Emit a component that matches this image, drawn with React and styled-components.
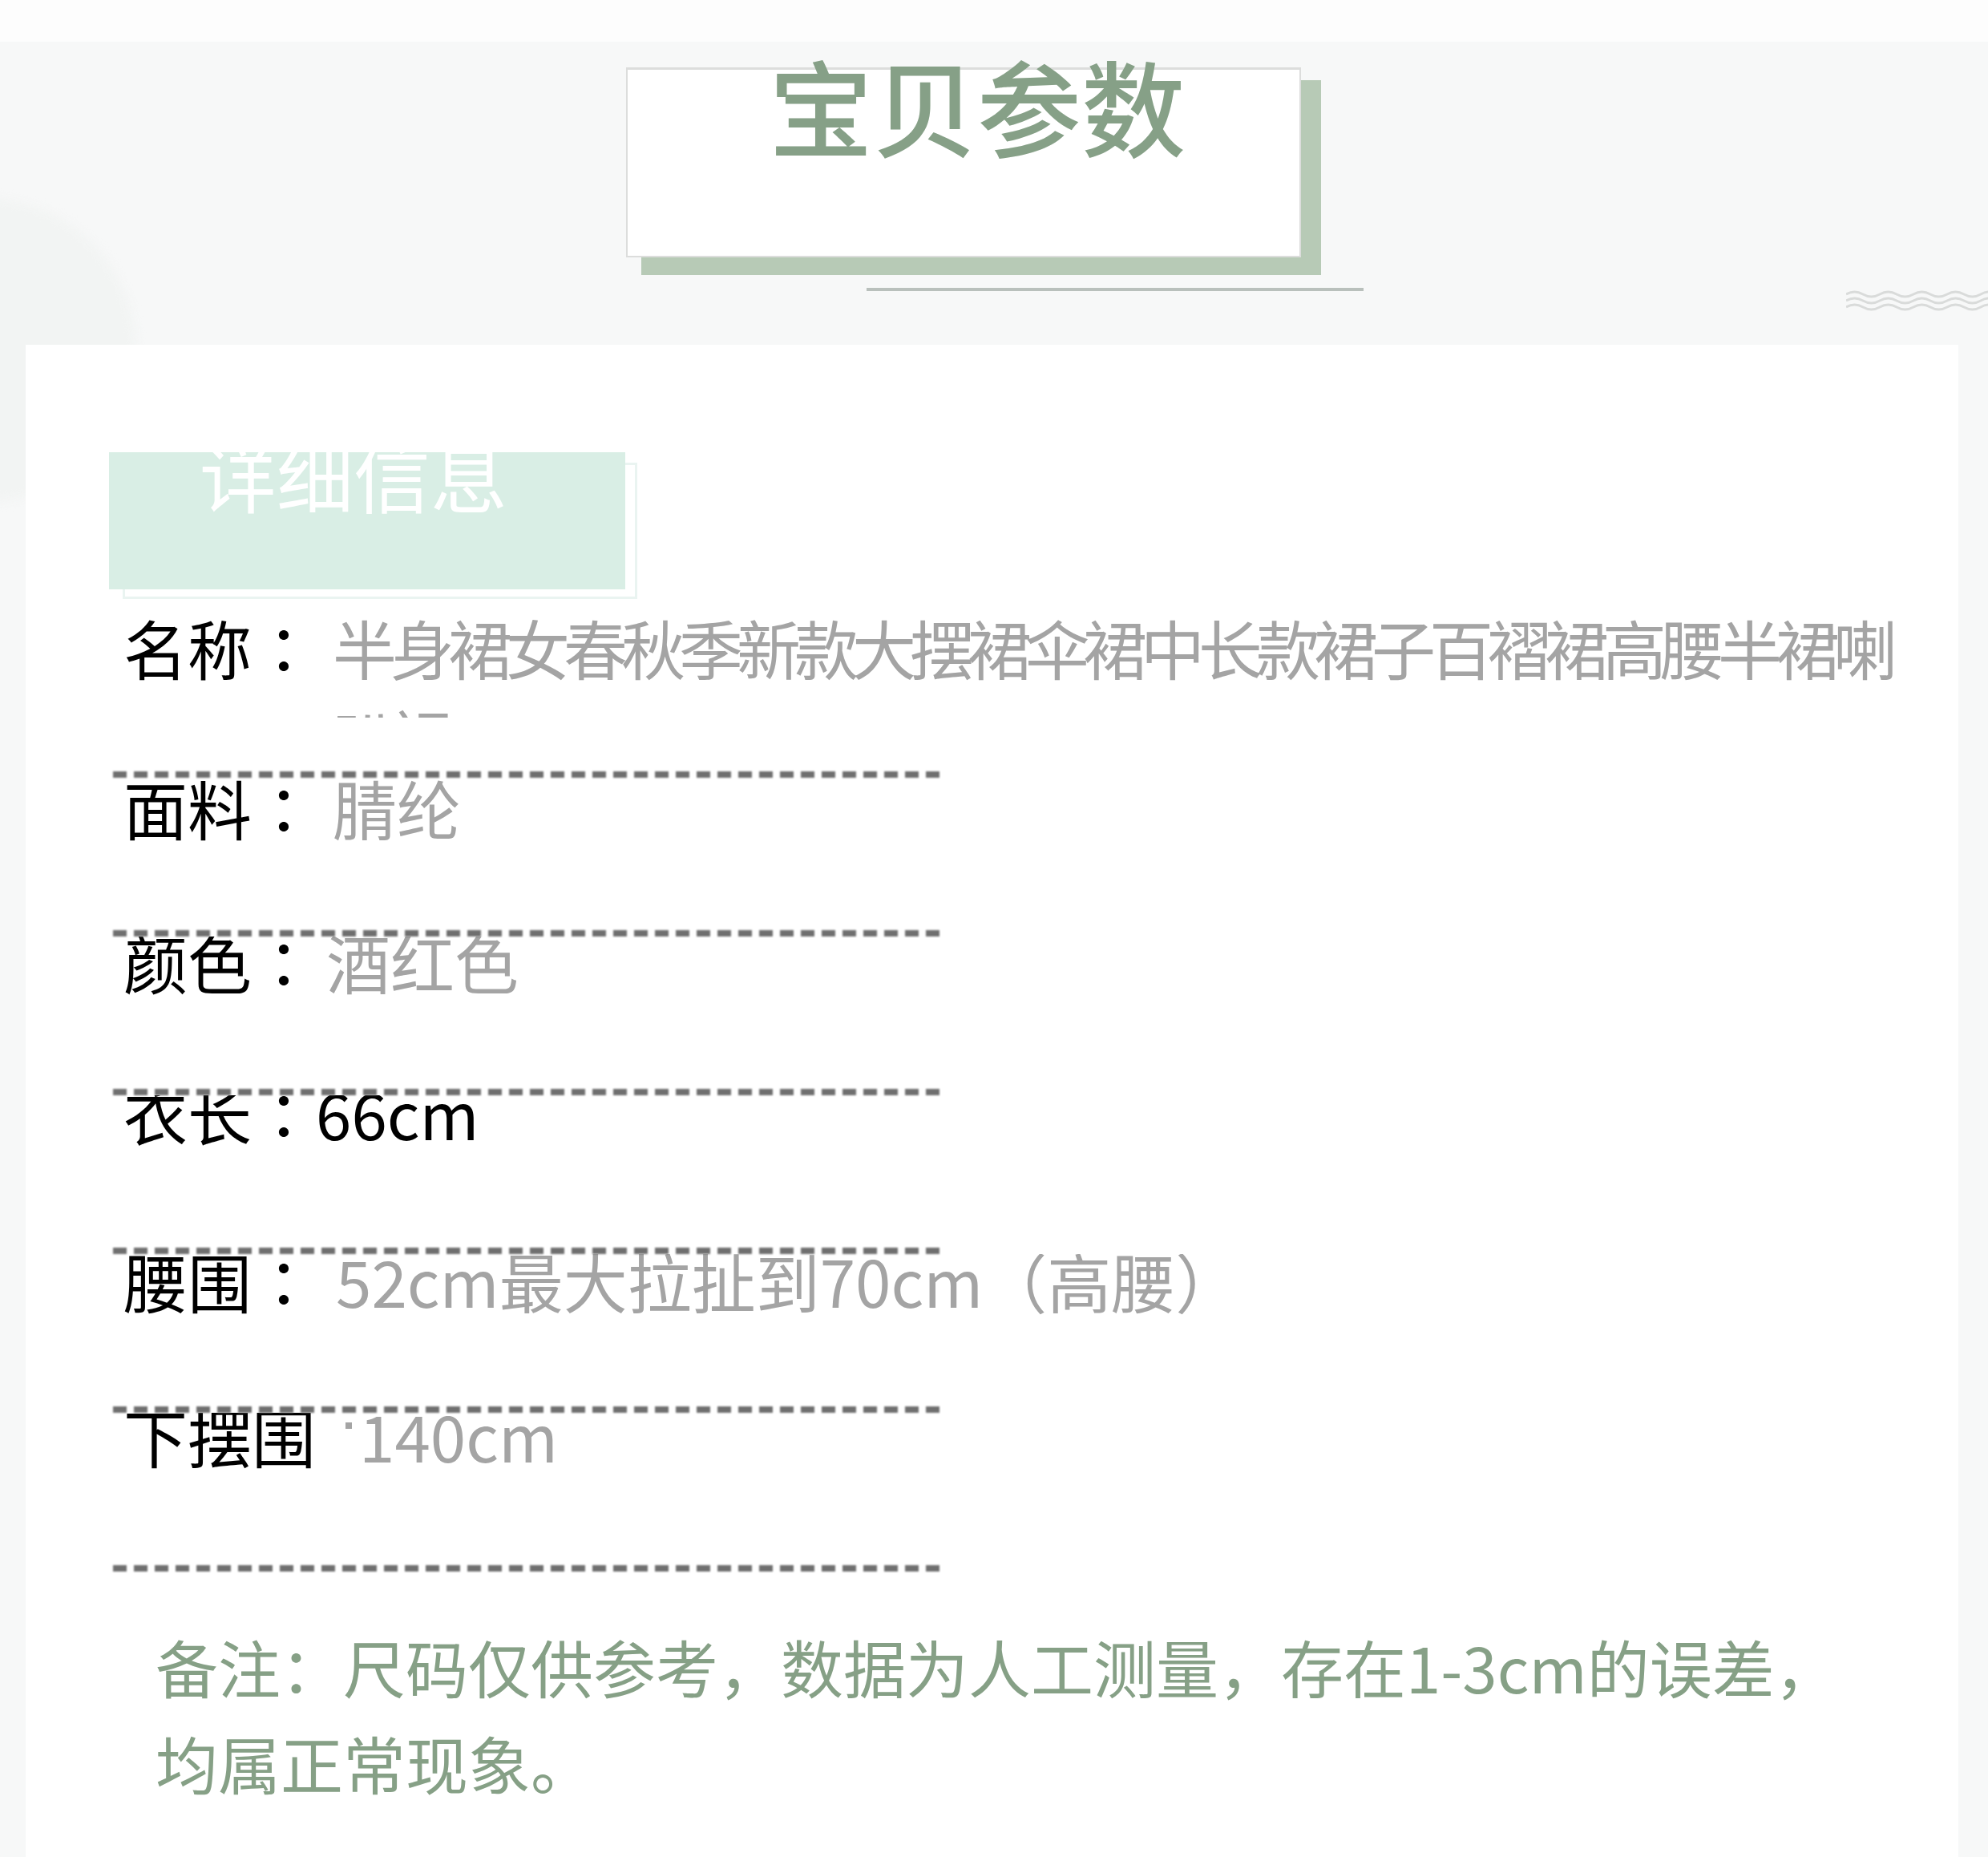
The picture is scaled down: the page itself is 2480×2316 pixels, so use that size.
import React from "react";
import styled, { createGlobalStyle } from "styled-components";

const GlobalStyle = createGlobalStyle`
  html, body {
    margin: 0;
    padding: 0;
    background: #fdfdfd;
  }
  body {
    font-family: "Noto Sans CJK SC", "Noto Sans", sans-serif;
  }
`;

const Page = styled.div`
  width: 2480px;
  min-height: 2316px;
  display: flex;
  flex-direction: column;
`;

const TopBand = styled.div`
  height: 52px;
  background: #fdfdfd;
`;

const Stage = styled.div`
  flex: 1;
  position: relative;
  display: flex;
  flex-direction: column;
  padding-top: 32px;
  background: #f7f8f8;
`;

const Halo = styled.div`
  position: absolute;
  left: -210px;
  top: 195px;
  width: 380px;
  height: 380px;
  border-radius: 50%;
  background: #f2f4f3;
  filter: blur(6px);
`;

const TitleBox = styled.div`
  box-sizing: border-box;
  margin-left: 781px;
  width: 842px;
  height: 237px;
  background: #fff;
  border: 2px solid #dcdddc;
  border-top-width: 3px;
  box-shadow: 22px 19px 0 3px #b7cab6;
`;

const TitleText = styled.div`
  margin-top: -23px;
  padding-left: 176px;
  font-size: 130px;
  line-height: 130px;
  font-weight: 500;
  color: #86a087;
  white-space: nowrap;
`;

const RuleRow = styled.div`
  display: flex;
  align-items: flex-start;
  margin-top: 38px;
`;

const Underline = styled.div`
  margin-left: 1081px;
  width: 620px;
  height: 4px;
  background: #b9c0bc;
`;

const Waves = styled.svg`
  margin-left: auto;
  width: 177px;
  height: 32px;
  filter: blur(0.6px);
`;

const Card = styled.div`
  position: relative;
  flex: 1;
  margin-top: 39px;
  margin-left: 32px;
  width: 2411px;
  padding-top: 134px;
  background: #fff;
`;

const Tag = styled.div`
  position: relative;
  margin-left: 104px;
  width: 659px;
  height: 171px;
`;

const TagOutline = styled.div`
  position: absolute;
  left: 17px;
  top: 13px;
  box-sizing: border-box;
  width: 642px;
  height: 170px;
  border: 3px solid #eaf4f1;
`;

const TagFill = styled.div`
  position: relative;
  width: 644px;
  height: 171px;
  overflow: hidden;
  background: #d9eee5;
`;

const TagText = styled.div`
  margin-top: -21px;
  padding-left: 113px;
  font-size: 96px;
  line-height: 96px;
  color: #fff;
  white-space: nowrap;
`;

const FieldList = styled.div`
  margin-left: 109px;
`;

const Field = styled.div`
  display: flex;
  align-items: flex-start;
  height: ${p => p.$h}px;
  margin-top: ${p => p.$top || 0}px;
  margin-bottom: ${p => p.$bottom || 0}px;
  padding-left: 13px;
  overflow: hidden;
  font-size: 80px;
  line-height: ${p => p.$lh}px;
`;

const Label = styled.span`
  flex: none;
  color: #000;
  white-space: nowrap;
`;

const Colon = styled.span`
  font-family: "Noto Sans CJK JP", "Noto Sans CJK SC", sans-serif;
`;

const Value = styled.span`
  margin-left: ${p => p.$gap || 0}px;
  color: ${p => (p.$dark ? "#000" : "#a4a4a4")};
  letter-spacing: ${p => (p.$tight ? "-8px" : "0")};
  max-width: ${p => (p.$tight ? "2000px" : "none")};
`;

const Tick = styled.span`
  display: inline-block;
  width: 8px;
  height: 8px;
  margin: 0 9px 42px 37px;
  background: #a4a4a4;
`;

const Divider = styled.div`
  width: 1037px;
  height: 8px;
  background: repeating-linear-gradient(
    90deg,
    #6f6f6f 0 17px,
    transparent 17px 26px
  );
  filter: blur(0.9px);
`;

const Note = styled.p`
  margin: 58px 0 0 162px;
  width: 2120px;
  font-size: 78px;
  line-height: 120px;
  font-weight: 400;
  color: #86a086;
`;

const rows = [
  { label: "面料", value: "腈纶", gap: 21, lh: 72 },
  { label: "颜色", value: "酒红色", gap: 13, lh: 60 },
  { label: "衣长", value: "66cm", gap: 0, lh: 42, dark: true },
  { label: "腰围", value: "52cm最大拉扯到70cm（高腰）", gap: 25, lh: 64 },
];

const wave = y => {
  let d = `M0 ${y}`;
  for (let x = 0; x < 177; x += 42) {
    d += ` Q${x + 10.5} ${y - 6} ${x + 21} ${y} T${x + 42} ${y}`;
  }
  return d;
};

const App = () => (
  <Page>
    <GlobalStyle />
    <TopBand />
    <Stage>
      <Halo />
      <TitleBox>
        <TitleText>宝贝参数</TitleText>
      </TitleBox>
      <RuleRow>
        <Underline />
        <Waves viewBox="0 0 177 32">
          {[8, 16, 24].map(y => (
            <path key={y} d={wave(y)} fill="none" stroke="#d9dbda" strokeWidth="3" />
          ))}
        </Waves>
      </RuleRow>
      <Card>
        <Tag>
          <TagOutline />
          <TagFill>
            <TagText>详细信息</TagText>
          </TagFill>
        </Tag>
        <FieldList>
          <Field $h={145} $lh={112} $top={15} $bottom={67}>
            <Label>
              名称<Colon>：</Colon>
            </Label>
            <Value $gap={21} $tight>
              半身裙女春秋季新款大摆裙伞裙中长款裙子百褶裙高腰半裙喇叭裙
            </Value>
          </Field>
          <Divider />
          {rows.map(r => (
            <React.Fragment key={r.label}>
              <Field $h={190} $lh={r.lh}>
                <Label>
                  {r.label}<Colon>：</Colon>
                </Label>
                <Value $gap={r.gap} $dark={r.dark}>{r.value}</Value>
              </Field>
              <Divider />
            </React.Fragment>
          ))}
          <Field $h={190} $lh={54}>
            <Label>下摆围</Label>
            <Value>
              <Tick />
              140cm
            </Value>
          </Field>
          <Divider />
        </FieldList>
        <Note>备注：尺码仅供参考，数据为人工测量，存在1-3cm的误差，均属正常现象。</Note>
      </Card>
    </Stage>
  </Page>
);

export default App;
